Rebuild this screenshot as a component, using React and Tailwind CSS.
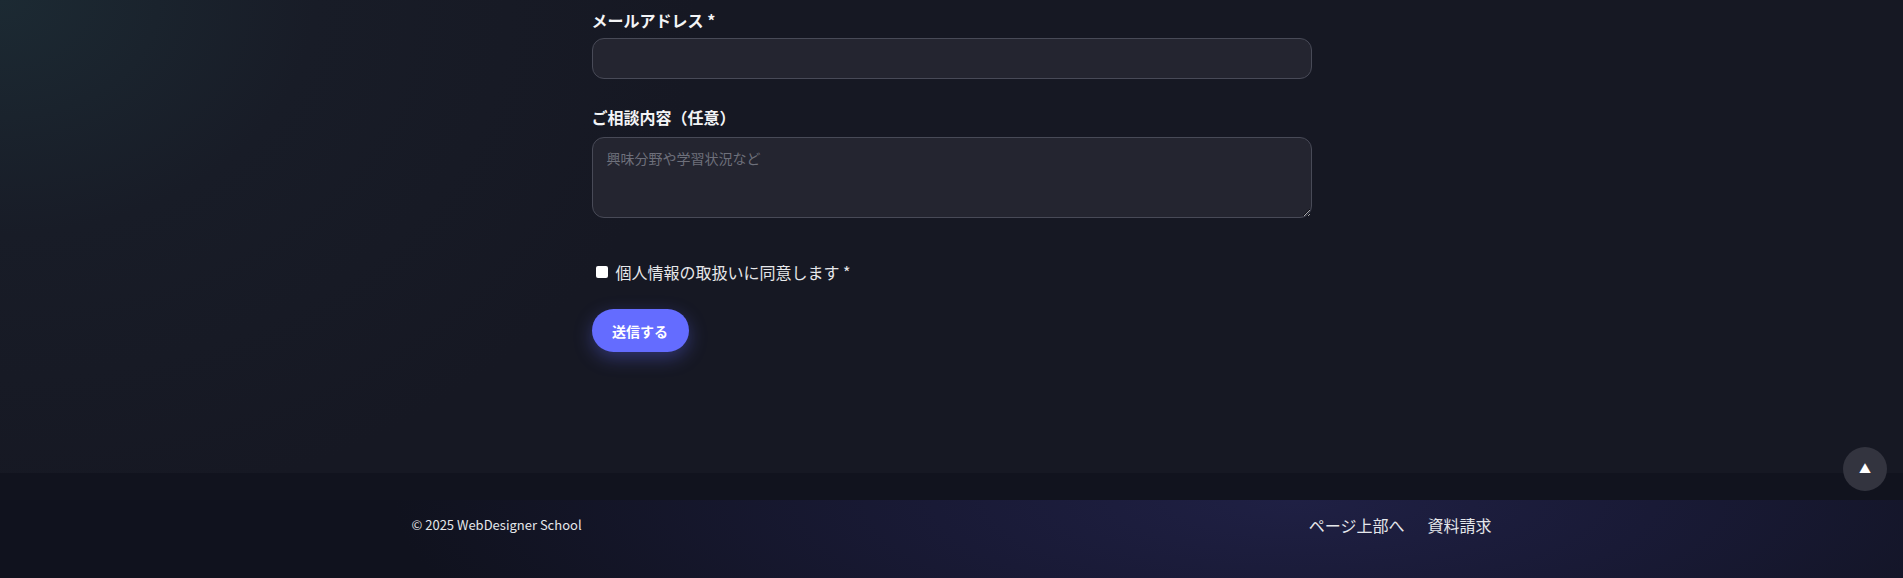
import React, { useState } from "react";

export default function App() {
  const [agree, setAgree] = useState(false);

  return (
    <div
      className="relative min-h-[578px] bg-[#161823] text-white"
      style={{ fontFamily: '"Noto Sans CJK JP", "Noto Sans", sans-serif' }}
    >
      {/* Contact form section */}
      <section className="h-[473px] bg-[radial-gradient(ellipse_700px_520px_at_0%_0%,#1c2a33_0%,#181c27_45%,#161823_100%)]">
        <form className="mx-auto w-[720px] pt-[8px]">
          <label className="block text-base font-bold leading-6 text-[#f3f4f6] mb-[6px]">
            メールアドレス *
          </label>
          <input
            type="email"
            className="block w-full h-[41px] rounded-xl border border-[#484a57] bg-[#242530] px-4 text-sm text-white outline-none"
          />

          <label className="block mt-[26px] text-base font-bold leading-6 text-[#f3f4f6] mb-[8px]">
            ご相談内容（任意）
          </label>
          <textarea
            placeholder="興味分野や学習状況など"
            className="block w-full h-[81px] rounded-xl border border-[#484a57] bg-[#242530] px-[14px] py-[10px] text-sm text-white placeholder:text-[#6e707b] outline-none"
          />

          <label className="mt-[42px] flex items-center gap-[8px] text-base leading-6 text-[#e6e7ea]">
            <input
              type="checkbox"
              checked={agree}
              onChange={() => setAgree(!agree)}
              className="ml-[4px] h-[12px] w-[12px] appearance-none rounded-[2px] bg-white"
            />
            個人情報の取扱いに同意します *
          </label>

          <button
            type="button"
            className="mt-[25px] h-[43px] w-[97px] rounded-full bg-[#646cff] text-sm font-bold text-white shadow-[0_6px_18px_rgba(100,108,255,0.35)]"
          >
            送信する
          </button>
        </form>
      </section>

      {/* Footer */}
      <footer className="bg-[#11131e]">
        <div className="h-[27px]" />
        <div className="h-[78px] bg-[radial-gradient(ellipse_900px_260px_at_68%_0%,#1f2044_0%,#191a36_40%,#10121e_100%)]">
          <div className="mx-auto flex max-w-[1080px] items-center justify-between pt-[13px]">
            <p className="text-[13px] leading-6 text-[#e5e7eb]">© 2025 WebDesigner School</p>
            <nav className="flex items-center gap-[23px] text-base leading-6 text-[#e5e7eb]">
              <a href="#top">ページ上部へ</a>
              <a href="#request">資料請求</a>
            </nav>
          </div>
        </div>
      </footer>

      {/* Back-to-top button */}
      <button
        type="button"
        className="absolute right-[16px] top-[447px] flex h-[44px] w-[44px] items-center justify-center rounded-full bg-[#33343f] text-[12px] text-white"
      >
        ▲
      </button>
    </div>
  );
}
